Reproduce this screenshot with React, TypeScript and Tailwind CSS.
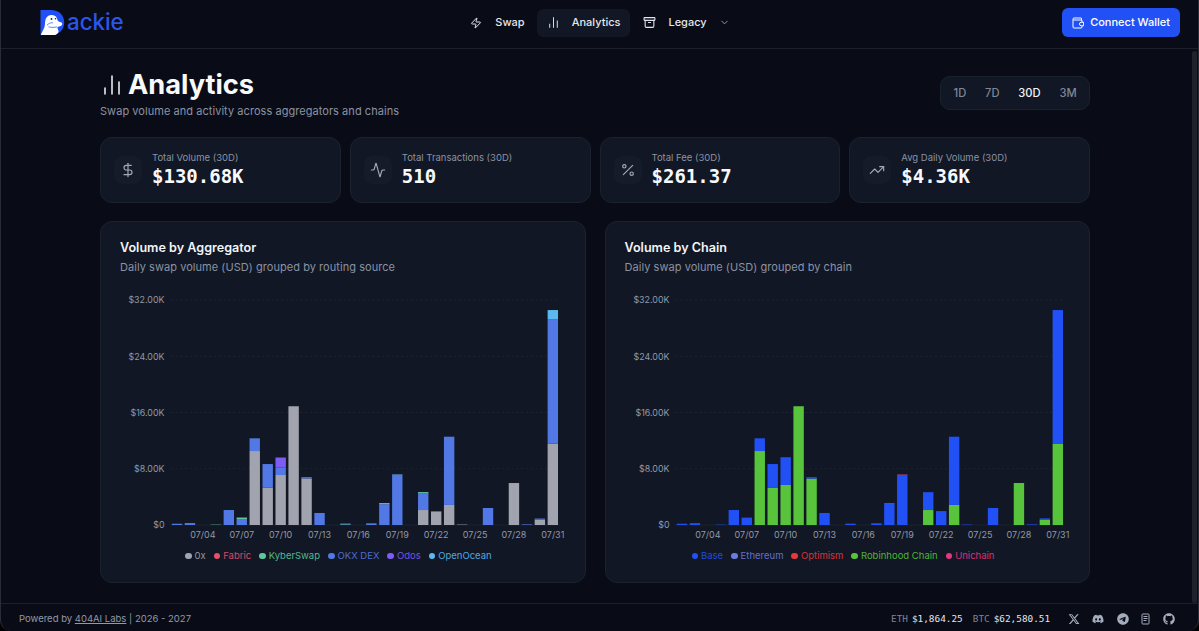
import React from 'react';
import { Activity, Archive, ChartNoAxesColumn, ChevronDown, DollarSign, Percent, TrendingUp, Zap } from 'lucide-react';
import { FaDiscord, FaGithub, FaTelegram, FaXTwitter } from 'react-icons/fa6';

interface Series {
    name: string;
    color: string;
    values: Record<number, number>;
}

interface ChartCardProps {
    title: string;
    subtitle: string;
    series: Series[];
    legend: string[];
    legendClass: string;
}

const DAYS = 30;
const MAX_VALUE = 32000;
const PLOT_LEFT = 50.5;
const PLOT_TOP = 10;
const PLOT_HEIGHT = 225;
const BAND = 12.96;
const BAR_WIDTH = 10.4;

// Values are keyed by day index, 0 = 07/02
const aggregatorSeries: Series[] = [
    { name: '0x', color: '#a1a3ae', values: { 6: 10520, 7: 5330, 8: 7110, 9: 16890, 10: 6620, 19: 2130, 20: 1920, 21: 2850, 22: 60, 26: 5970, 28: 750, 29: 11590 } },
    { name: 'Fabric', color: '#e5506b', values: {} },
    { name: 'OKX DEX', color: '#5178e4', values: { 0: 180, 1: 190, 4: 2130, 5: 850, 6: 1810, 7: 3340, 8: 1040, 10: 190, 11: 1710, 13: 80, 15: 240, 16: 2970, 17: 7180, 19: 2350, 20: 60, 21: 9710, 24: 2420, 27: 85, 28: 170, 29: 17700 } },
    { name: 'KyberSwap', color: '#5fc79f', values: { 1: 80, 3: 50, 5: 210, 13: 110, 16: 150, 17: 40, 19: 200 } },
    { name: 'Odos', color: '#7c5cf5', values: { 8: 1450 } },
    { name: 'OpenOcean', color: '#5cb8f0', values: { 29: 1280 } },
];

const chainSeries: Series[] = [
    { name: 'Robinhood Chain', color: '#58c43b', values: { 6: 10520, 7: 5330, 8: 5690, 9: 16890, 10: 6600, 19: 2130, 21: 2850, 26: 5970, 28: 720, 29: 11590 } },
    { name: 'Base', color: '#2151f5', values: { 0: 180, 1: 260, 3: 50, 4: 2130, 5: 1050, 6: 1810, 7: 3340, 8: 3950, 10: 140, 11: 1710, 13: 190, 15: 240, 16: 2990, 17: 7150, 19: 2540, 20: 1980, 21: 9710, 22: 60, 24: 2420, 27: 85, 28: 220, 29: 18980 } },
    { name: 'Ethereum', color: '#6b7be0', values: {} },
    { name: 'Optimism', color: '#e8383b', values: { 10: 70, 16: 110, 17: 60 } },
    { name: 'Unichain', color: '#ea3482', values: {} },
];

const aggregatorLegend = ['0x', 'Fabric', 'KyberSwap', 'OKX DEX', 'Odos', 'OpenOcean'];
const chainLegend = ['Base', 'Ethereum', 'Optimism', 'Robinhood Chain', 'Unichain'];

const yTicks = [
    { value: 32000, label: '$32.00K' },
    { value: 24000, label: '$24.00K' },
    { value: 16000, label: '$16.00K' },
    { value: 8000, label: '$8.00K' },
    { value: 0, label: '$0' },
];

const xTicks = ['07/04', '07/07', '07/10', '07/13', '07/16', '07/19', '07/22', '07/25', '07/28', '07/31'];

const stats = [
    { label: 'Total Volume (30D)', value: '$130.68K', icon: DollarSign },
    { label: 'Total Transactions (30D)', value: '510', icon: Activity },
    { label: 'Total Fee (30D)', value: '$261.37', icon: Percent },
    { label: 'Avg Daily Volume (30D)', value: '$4.36K', icon: TrendingUp },
];

const ranges = ['1D', '7D', '30D', '3M'];

const toY = (value: number) => PLOT_TOP + PLOT_HEIGHT * (1 - value / MAX_VALUE);

const Logo: React.FC = () => (
    <div className="ml-[21px] flex items-center">
        <svg width="25" height="26" viewBox="0 0 25 26">
            <path d="M.5 0H11c8 0 13.2 5.4 13.2 12.6S19 25 11 25H.5z" fill="#2151f5" />
            <path d="M.8 25c1-3.2 3.6-6 4-9.5C5.2 12 5 10 6.2 8 7.5 5.7 9.7 4.8 12 5c3.2.2 5.2 2.3 5.6 5.3.3 1.2 1.9 1.5 3.4 2 1.7.7 1.7 2.5.2 3.4-1.4.8-3.2.8-3.7 1.5-.4 1 .8 2.5 1 3.8.2 1.8-2 4-4.5 4z" fill="#fff" />
            <path d="M7 15.2c1.5-1.7 3.5-2.6 6-2.5M8.5 16.8c3 .8 6 .8 8.5 0" fill="none" stroke="#2151f5" strokeWidth=".7" />
            <circle cx="11.5" cy="9" r=".9" fill="#14245c" />
            <circle cx="15.5" cy="8.8" r=".8" fill="#14245c" />
        </svg>
        <span className="ml-[2px] text-[22.3px] leading-none font-[550] text-[#2c55ee]">ackie</span>
    </div>
);

const WalletIcon: React.FC = () => (
    <svg width="12" height="12" viewBox="0 0 24 24" fill="none" stroke="currentColor" strokeWidth="2" strokeLinecap="round" strokeLinejoin="round">
        <path d="M20 10V7a1 1 0 0 0-1-1H3.5M19 6V3a1 1 0 0 0-1-1H4a2 2 0 0 0-2 2v16a2 2 0 0 0 2 2h14a2 2 0 0 0 2-2v-2" />
        <path d="M22.5 10.5h-4a3.5 3.5 0 0 0 0 7h4z" />
    </svg>
);

const DocsIcon: React.FC = () => (
    <svg width="9" height="12" viewBox="0 0 9 12" fill="none" stroke="currentColor" strokeWidth="1">
        <rect x="1" y="1" width="7" height="10" rx=".8" />
        <path d="M2.5 3.5h4M2.5 5.5h4M2.5 7.5h3" />
    </svg>
);

const Header: React.FC = () => (
    <header className="grid h-[49px] shrink-0 grid-cols-[1fr_auto_1fr] items-center border-b border-[#1c202b] px-[18px] pb-[3px]">
        <Logo />
        <nav className="flex items-center text-[11px] font-medium text-[#e4e6ec]">
            <a className="flex h-7 items-center gap-[13px] px-3"><Zap size={12} />Swap</a>
            <a className="flex h-7 items-center gap-3 rounded-md bg-[#111724] px-[10px]"><ChartNoAxesColumn size={13} strokeWidth={1.75} />Analytics</a>
            <a className="flex h-7 items-center gap-3 pr-[11px] pl-[13px]"><Archive size={13} />Legacy<ChevronDown size={11} className="text-[#9ca3af]" /></a>
        </nav>
        <button className="flex h-[29px] items-center gap-[6px] justify-self-end rounded-md bg-[#2151f5] px-[10px] text-[11px] font-medium text-white">
            <WalletIcon />
            Connect Wallet
        </button>
    </header>
);

const ChartCard: React.FC<ChartCardProps> = ({ title, subtitle, series, legend, legendClass }) => {
    const bars = Array.from({ length: DAYS }, (_, day) => {
        let total = 0;
        return series.map(s => {
            const value = s.values[day] || 0;
            const y = toY(total + value);
            const height = toY(total) - y;
            total += value;
            return value > 0 ? (
                <rect
                    key={`${s.name}-${day}`}
                    x={PLOT_LEFT + BAND * day + (BAND - BAR_WIDTH) / 2}
                    y={y}
                    width={BAR_WIDTH}
                    height={height}
                    fill={s.color}
                />
            ) : null;
        });
    });

    return (
        <section className="h-[362px] rounded-xl border border-[#1b222f] bg-[#111724] px-[19px] pt-[18px]">
            <h2 className="text-[12.6px] leading-[15px] font-semibold text-[#f3f4f6]">{title}</h2>
            <p className="mt-[5px] text-[11px] leading-[14px] tracking-[0.05px] text-[#8b92a3]">{subtitle}</p>
            <svg className="mt-[16px] block" width="446" height="252" viewBox="0 0 446 252">
                {yTicks.map(tick => (
                    <g key={tick.value}>
                        <line x1={PLOT_LEFT} x2={PLOT_LEFT + BAND * DAYS} y1={toY(tick.value)} y2={toY(tick.value)} stroke="#1d2431" strokeDasharray={tick.value ? '2.4 2.4' : undefined} />
                        <text x="44.5" y={toY(tick.value) + 3.4} textAnchor="end" fontSize="8.9" fill="#9299a8">{tick.label}</text>
                    </g>
                ))}
                {bars}
                {xTicks.map((label, i) => (
                    <text key={label} x={PLOT_LEFT + BAND * (i * 3 + 2.5)} y="248" textAnchor="middle" fontSize="9" fill="#9299a8">{label}</text>
                ))}
            </svg>
            <div className={`mt-[7px] flex gap-[8px] text-[9.5px] leading-[14px] ${legendClass}`}>
                {legend.map(name => {
                    const color = series.find(s => s.name === name)?.color;
                    return (
                        <span key={name} className="flex items-center gap-[3px] whitespace-nowrap" style={{ color }}>
                            <span className="size-[6.5px] rounded-full bg-current" />
                            <span className="opacity-90">{name}</span>
                        </span>
                    );
                })}
            </div>
        </section>
    );
};

const Footer: React.FC = () => (
    <footer className="flex h-[28px] shrink-0 items-center justify-between border-t border-[#1c202b] pt-[3px] pr-[23px] pl-[18px] text-[9.5px] text-[#9299a8]">
        <p>Powered by <a className="underline">404AI Labs</a> | 2026 - 2027</p>
        <div className="flex items-center">
            <div className="flex gap-[10px] font-['DejaVu_Sans_Mono',monospace] text-[9.4px]">
                <span><span className="text-[#7c8393]">ETH</span><span className="ml-[4px] text-[#e4e6ec]">$1,864.25</span></span>
                <span><span className="text-[#7c8393]">BTC</span><span className="ml-[4px] text-[#e4e6ec]">$62,580.51</span></span>
            </div>
            <div className="ml-[17.5px] flex items-center gap-[12.6px] text-[#a3abbd]">
                <FaXTwitter size={12} />
                <FaDiscord size={12} />
                <FaTelegram size={12} />
                <DocsIcon />
                <FaGithub size={12} />
            </div>
        </div>
    </footer>
);

const App: React.FC = () => {
    return (
        <div className="h-[631px] w-[1199px] bg-black">
            <div className="relative flex h-full flex-col overflow-hidden rounded-b-[11px] border-x border-[#2a2d35] bg-[#090c16] font-[Inter,sans-serif]">
                <Header />
                <main className="min-h-0 flex-1 pr-[108px] pl-[99px]">
                    <div className="flex h-[88px] items-start justify-between">
                        <div className="pt-[20px]">
                            <h1 className="flex items-center text-[27.2px] leading-[32px] font-bold text-[#f8f9fb]">
                                <ChartNoAxesColumn size={24} strokeWidth={1.5} className="mr-[4px]" />
                                Analytics
                            </h1>
                            <p className="mt-[3px] text-[11px] leading-[14px] tracking-[0.05px] text-[#8b92a3]">Swap volume and activity across aggregators and chains</p>
                        </div>
                        <div className="mt-[27px] flex h-[34px] items-center rounded-[10px] border border-[#1b222f] bg-[#111724] px-[3px] text-[11.2px] font-medium text-[#7f8696]">
                            {ranges.map(range => (
                                <button key={range} className={`px-[9.4px] ${range === '30D' ? 'text-[#f3f4f6]' : ''}`}>{range}</button>
                            ))}
                        </div>
                    </div>

                    <div className="grid grid-cols-4 gap-[9px]">
                        {stats.map(({ label, value, icon: Icon }) => (
                            <div key={label} className="flex h-[66px] items-center rounded-xl border border-[#1b222f] bg-[#111724] pl-[13px]">
                                <div className="flex size-[28px] items-center justify-center rounded-lg bg-[#151b28]">
                                    <Icon size={16} strokeWidth={1.75} className="text-[#a3a9b6]" />
                                </div>
                                <div className="ml-[10px]">
                                    <p className="text-[9.5px] leading-[12px] text-[#8b92a3]">{label}</p>
                                    <p className="font-['DejaVu_Sans_Mono',monospace] text-[19px] leading-[25px] font-bold text-[#f8f9fb]">{value}</p>
                                </div>
                            </div>
                        ))}
                    </div>

                    <div className="mt-[18px] grid grid-cols-2 gap-[19px]">
                        <ChartCard
                            title="Volume by Aggregator"
                            subtitle="Daily swap volume (USD) grouped by routing source"
                            series={aggregatorSeries}
                            legend={aggregatorLegend}
                            legendClass="ml-[65px]"
                        />
                        <ChartCard
                            title="Volume by Chain"
                            subtitle="Daily swap volume (USD) grouped by chain"
                            series={chainSeries}
                            legend={chainLegend}
                            legendClass="ml-[67px]"
                        />
                    </div>
                </main>
                <Footer />
                {/* Scrollbar thumb */}
                <div className="absolute top-[51px] right-px h-[552px] w-[5px] rounded-full bg-[#1f222b]" />
            </div>
        </div>
    );
};

export default App;
